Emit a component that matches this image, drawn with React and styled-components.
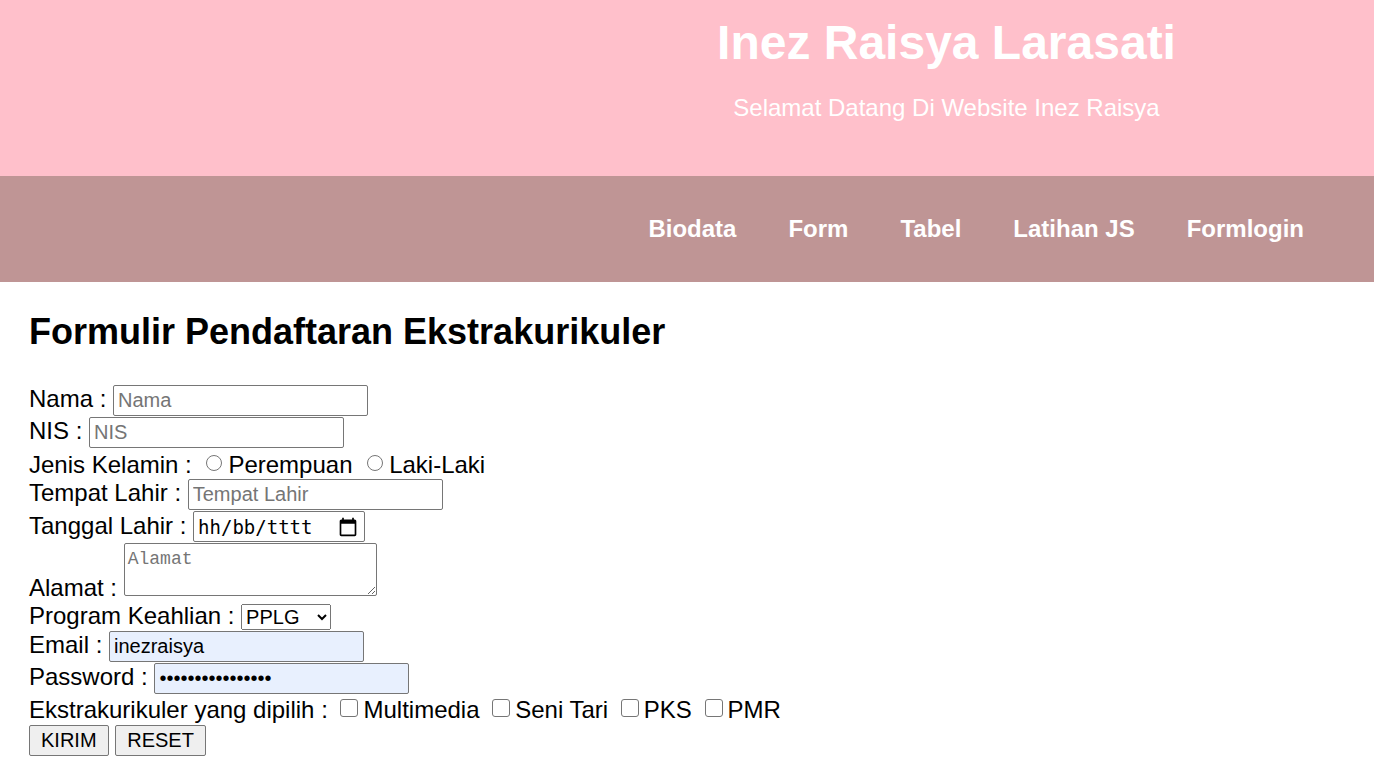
import styled, { createGlobalStyle } from "styled-components";

const GlobalStyle = createGlobalStyle`
  body {
    margin: 0;
    font-family: "Liberation Sans", Arial, sans-serif;
    font-size: 24px;
    color: #000;
    background: #fff;
  }
`;

const Header = styled.header`
  background-color: #ffc0cb;
  height: 176px;
  box-sizing: border-box;
  padding: 15px 0 0 519px;
  text-align: center;
  color: #fff;
`;

const Title = styled.h1`
  margin: 0;
  font-size: 48px;
  font-weight: bold;
`;

const Subtitle = styled.p`
  margin: 24px 0 0;
  font-size: 24px;
`;

const Nav = styled.nav`
  background-color: #bf9595;
  height: 106px;
  display: flex;
  justify-content: flex-end;
  align-items: center;
  gap: 52px;
  padding-right: 70px;
`;

const NavLink = styled.a`
  color: #fff;
  font-weight: bold;
  font-size: 24px;
  text-decoration: none;
`;

const Main = styled.main`
  padding: 0 29px;
`;

const Heading = styled.h2`
  font-size: 36px;
  margin: 29px 0 32px;
`;

const Row = styled.div`
  height: ${(p) => p.$h || 32}px;
  padding-top: ${(p) => p.$pt || 0}px;
  box-sizing: border-box;
  white-space: nowrap;
`;

const TextInput = styled.input`
  font: 20px "Liberation Sans", Arial, sans-serif;
  width: ${(p) => p.$w || 255}px;
  height: 31px;
  box-sizing: border-box;
  margin: 0;
  padding: 3px 4px;
  border: 1px solid #767676;
  border-radius: 2px;
  background: ${(p) => (p.$filled ? "#e8f0fe" : "#fff")};
  color: #000;
  vertical-align: baseline;

  &::placeholder {
    color: #757575;
  }
`;

const Radio = styled.input`
  appearance: none;
  box-sizing: border-box;
  width: 16px;
  height: 16px;
  margin: 0 6px 2px 8px;
  border: 1px solid #767676;
  border-radius: 50%;
  background: #fff;
  vertical-align: baseline;
`;

const Check = styled.input`
  appearance: none;
  box-sizing: border-box;
  width: 18px;
  height: 18px;
  margin: 0 5px 1px 6px;
  border: 1px solid #767676;
  border-radius: 3px;
  background: #fff;
  vertical-align: baseline;
`;

const DateBox = styled.span`
  display: inline-flex;
  align-items: center;
  justify-content: space-between;
  width: 172px;
  height: 31px;
  box-sizing: border-box;
  padding: 0 6px 0 4px;
  border: 1px solid #767676;
  border-radius: 2px;
  vertical-align: baseline;
  font: 19px "DejaVu Sans Mono", "Liberation Mono", monospace;
`;

const Address = styled.textarea`
  width: 253px;
  height: 53px;
  box-sizing: border-box;
  margin: 0;
  padding: 5px 3px;
  border: 1px solid #767676;
  border-radius: 2px;
  font: 18px "Liberation Mono", monospace;
  vertical-align: baseline;

  &::placeholder {
    color: #757575;
  }
`;

const Select = styled.select`
  font: 20px "Liberation Sans", Arial, sans-serif;
  width: 90px;
  margin: 0;
  color: #000;
`;

const Button = styled.button`
  font: 20px "Liberation Sans", Arial, sans-serif;
  height: 31px;
  margin: 0;
  padding: 3px 11px;
  border: 1px solid #767676;
  border-radius: 2px;
  background: #efefef;
  color: #000;
`;

const CalendarIcon = () => (
  <svg width="20" height="20" viewBox="0 0 24 24" fill="#000">
    <path d="M20 3h-1V1h-2v2H7V1H5v2H4c-1.1 0-2 .9-2 2v16c0 1.1.9 2 2 2h16c1.1 0 2-.9 2-2V5c0-1.1-.9-2-2-2zm0 18H4V8h16v13z" />
  </svg>
);

const App = () => {
  return (
    <>
      <GlobalStyle />
      <Header>
        <Title>Inez Raisya Larasati</Title>
        <Subtitle>Selamat Datang Di Website Inez Raisya</Subtitle>
      </Header>
      <Nav>
        <NavLink href="#">Biodata</NavLink>
        <NavLink href="#">Form</NavLink>
        <NavLink href="#">Tabel</NavLink>
        <NavLink href="#">Latihan JS</NavLink>
        <NavLink href="#">Formlogin</NavLink>
      </Nav>
      <Main>
        <Heading>Formulir Pendaftaran Ekstrakurikuler</Heading>
        <form onSubmit={(e) => e.preventDefault()}>
          <Row>
            Nama : <TextInput placeholder="Nama" />
          </Row>
          <Row>
            NIS : <TextInput placeholder="NIS" />
          </Row>
          <Row $h={30} $pt={2}>
            Jenis Kelamin : <Radio type="radio" name="jk" />Perempuan <Radio type="radio" name="jk" />Laki-Laki
          </Row>
          <Row>
            Tempat Lahir : <TextInput placeholder="Tempat Lahir" />
          </Row>
          <Row>
            Tanggal Lahir : <DateBox>
              <span>hh/bb/tttt</span>
              <CalendarIcon />
            </DateBox>
          </Row>
          <Row $h={59}>
            Alamat : <Address placeholder="Alamat" />
          </Row>
          <Row $h={29}>
            Program Keahlian : <Select defaultValue="PPLG">
              <option>PPLG</option>
              <option>TJKT</option>
              <option>DKV</option>
            </Select>
          </Row>
          <Row>
            Email : <TextInput $filled defaultValue="inezraisya" />
          </Row>
          <Row>
            Password : <TextInput $filled type="password" defaultValue="inezraisya123456" />
          </Row>
          <Row $h={30} $pt={1}>
            Ekstrakurikuler yang dipilih : <Check type="checkbox" />Multimedia <Check type="checkbox" />Seni Tari <Check type="checkbox" />PKS <Check type="checkbox" />PMR
          </Row>
          <Row>
            <Button type="submit">KIRIM</Button> <Button type="reset">RESET</Button>
          </Row>
        </form>
      </Main>
    </>
  );
};

export default App;
